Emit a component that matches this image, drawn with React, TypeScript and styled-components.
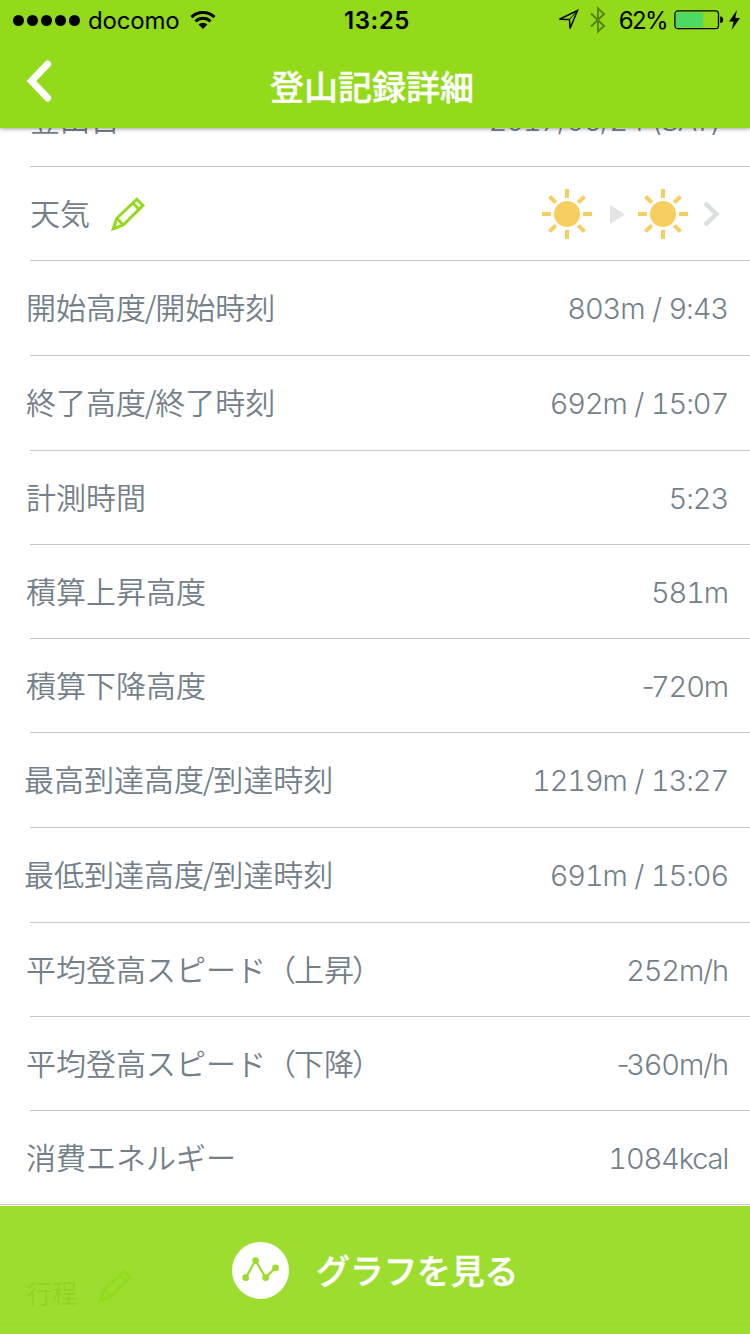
import React from "react";
import styled, { createGlobalStyle } from "styled-components";

const GREEN = "#92da1a";
const SLATE = "#73808a";
const RULE = "#c8c8ca";

const GlobalStyle = createGlobalStyle`
  * { box-sizing: border-box; }
  body {
    margin: 0;
    background: #fff;
    font-family: "Noto Sans CJK JP", sans-serif;
  }
`;

const Screen = styled.div`
  position: relative;
  width: 750px;
  height: 1334px;
  overflow: hidden;
  background: #fff;
`;

const Header = styled.header`
  position: absolute;
  inset: 0 0 auto 0;
  z-index: 2;
  height: 128px;
  background: ${GREEN};
  box-shadow: 0 1px 4px rgba(0, 0, 0, 0.38);
`;

const StatusBar = styled.div`
  display: grid;
  grid-template-columns: 1fr auto 1fr;
  align-items: center;
  height: 40px;
  padding: 0 10px 0 13px;
  font-family: Inter, sans-serif;
  font-size: 24px;
  color: #000;
`;

const StatusGroup = styled.div<{ $end?: boolean }>`
  display: flex;
  align-items: center;
  justify-content: ${(p) => (p.$end ? "flex-end" : "flex-start")};
`;

const SignalDots = styled.div`
  display: flex;
  gap: 3px;
  margin-right: 8px;
`;

const Dot = styled.i`
  width: 11px;
  height: 11px;
  border-radius: 50%;
  background: #000;
`;

const Carrier = styled.span`
  margin-right: 11px;
  letter-spacing: -0.2px;
`;

const Clock = styled.span`
  padding-left: 1px;
  font-weight: 600;
  letter-spacing: 0.6px;
`;

const Percent = styled.span`
  margin: 0 7px 0 13px;
  letter-spacing: -1.6px;
`;

const NavBar = styled.div`
  display: grid;
  grid-template-columns: 80px 1fr 80px;
  align-items: center;
  height: 88px;
`;

const BackButton = styled.button`
  display: flex;
  padding: 0 0 6px 24px;
  border: 0;
  background: none;
`;

const Title = styled.h1`
  margin: 0;
  padding: 4px 6px 0 0;
  text-align: center;
  font-size: 34px;
  line-height: 44px;
  font-weight: 500;
  -webkit-text-stroke: 0.4px #fff;
  color: #fff;
`;

const List = styled.main`
  display: flex;
  flex-direction: column;
  padding-top: 73px;
`;

const Row = styled.div<{
  $height: number;
  $indent: number;
  $end?: number;
  $lift?: number;
  $full?: boolean;
}>`
  display: flex;
  align-items: center;
  justify-content: space-between;
  flex: none;
  height: ${(p) => p.$height}px;
  padding: 0 ${(p) => p.$end ?? 22}px ${(p) => p.$lift ?? p.$height - 94}px ${(p) => p.$indent}px;
  background: linear-gradient(${RULE}, ${RULE}) ${(p) => (p.$full ? 0 : 30)}px 100% / 100% 1px no-repeat;
`;

const Label = styled.span`
  padding-bottom: 4px;
  font-size: 30px;
  line-height: 44px;
  font-weight: 350;
  color: ${SLATE};
  white-space: nowrap;
`;

const Tight = styled.span<{ $by: number }>`
  letter-spacing: ${(p) => -p.$by}px;
`;

const Slash = styled.span`
  margin: 0 -1.3px;
`;

const Value = styled.span<{ $tracking?: number }>`
  padding-top: 2px;
  font-family: Inter, "Liberation Sans", sans-serif;
  font-size: 29px;
  line-height: 44px;
  font-weight: 300;
  font-variant-numeric: tabular-nums;
  letter-spacing: ${(p) => p.$tracking ?? -1.15}px;
  word-spacing: 1px;
  color: ${SLATE};
  white-space: nowrap;
`;

const LabelGroup = styled.div`
  display: flex;
  align-items: center;
  gap: 20px;
`;

const Weather = styled.div`
  display: flex;
  align-items: center;
  margin-right: 7px;
`;

const ItineraryRow = styled.section`
  display: flex;
  align-items: flex-end;
  gap: 20px;
  flex: none;
  height: 120px;
  padding: 0 0 9px 27px;
  border-bottom: 1px solid ${RULE};
  svg { margin-bottom: 11px; }
`;

const SectionLabel = styled(Label)`
  font-size: 25px;
  line-height: 38px;
`;

const GraphButton = styled.button`
  position: absolute;
  inset: auto 0 0 0;
  z-index: 1;
  display: flex;
  align-items: center;
  gap: 26px;
  height: 128px;
  padding: 0 0 0 232px;
  border: 0;
  background: rgba(146, 218, 26, 0.91);
  color: #fff;
  font-family: "Noto Sans CJK JP", sans-serif;
  font-size: 34px;
  line-height: 44px;
  font-weight: 500;
  letter-spacing: -0.3px;
  -webkit-text-stroke: 0.4px #fff;
`;

const Pencil = () => (
  <svg width="36" height="36" viewBox="0 0 36 36" fill="none" stroke={GREEN} strokeWidth="2.9">
    <path d="M3.5 32.5 6.8 22.2 26.8 3.2 33 9.4 13.2 29Z" />
    <path d="M22.8 7 29 13.2M6.8 22.2 13.2 29" />
    <path d="M1 35 3.8 27 9 32.4Z" fill={GREEN} stroke="none" />
  </svg>
);

const Sun = () => (
  <svg width="50" height="50" viewBox="0 0 50 50" stroke="#f7cf60" strokeWidth="4">
    <circle cx="25" cy="25" r="13" fill="#f7cf60" stroke="none" />
    <path d="M25 0v9M25 41v9M0 25h9M41 25h9M7.5 7.5l6.2 6.2M36.3 36.3l6.2 6.2M7.5 42.5l6.2-6.2M36.3 13.7l6.2-6.2" />
  </svg>
);

const PlayArrow = styled.svg`
  margin: 0 13px 0 18px;
`;

const Chevron = styled.svg`
  margin-left: 15px;
`;

const Location = () => (
  <svg width="22" height="22" viewBox="0 0 22 22" fill="none" stroke="#000" strokeWidth="1.5">
    <path d="M1.5 10.2 19.5 1.5 12 19.5 11.5 10.5Z" />
    <path d="M11.5 10.5 19.5 1.5" strokeWidth="1" />
  </svg>
);

const Bluetooth = styled.svg`
  margin-left: 10px;
`;

const Wifi = () => (
  <svg width="26" height="20" viewBox="0 0 26 20" fill="none" stroke="#000" strokeWidth="3">
    <path d="M1.5 7.2a16.5 16.5 0 0 1 23 0M5.5 11.4a10.8 10.8 0 0 1 15 0" />
    <path d="M8.6 14.6a6.3 6.3 0 0 1 8.8 0L13 19Z" fill="#000" stroke="none" />
  </svg>
);

const Battery = () => (
  <svg width="50" height="20" viewBox="0 0 50 20">
    <rect x="0.9" y="0.9" width="43.6" height="17.8" rx="3.2" fill="none" stroke="#000" strokeWidth="1.3" />
    <rect x="2.2" y="2.5" width="27" height="14.7" rx="1" fill="#4cd964" />
    <path d="M46.2 6.3c4 .6 4 6.2 0 6.8Z" fill="#000" />
  </svg>
);

const Bolt = styled.svg`
  margin-left: 5px;
`;

const GraphIcon = () => (
  <svg width="58" height="58" viewBox="0 0 58 58">
    <circle cx="28.5" cy="29.4" r="28.5" fill="#fff" />
    <path d="M13.7 36.6 23.6 19.6 33.6 36.6 43.5 26.8" fill="none" stroke="#9bdc2f" strokeWidth="2.2" />
    <g fill="#9bdc2f">
      <circle cx="13.7" cy="36.6" r="3.4" />
      <circle cx="23.6" cy="19.6" r="3.4" />
      <circle cx="33.6" cy="36.6" r="3.4" />
      <circle cx="43.5" cy="26.8" r="3.4" />
    </g>
  </svg>
);

type RecordItem = { label: string; value: string; height: number; indent: number; full?: boolean };

const records: RecordItem[] = [
  { label: "開始高度/開始時刻", value: "803m / 9:43", height: 95, indent: 26 },
  { label: "終了高度/終了時刻", value: "692m / 15:07", height: 95, indent: 26 },
  { label: "計測時間", value: "5:23", height: 94, indent: 26 },
  { label: "積算上昇高度", value: "581m", height: 94, indent: 26 },
  { label: "積算下降高度", value: "-720m", height: 94, indent: 26 },
  { label: "最高到達高度/到達時刻", value: "1219m / 13:27", height: 95, indent: 24 },
  { label: "最低到達高度/到達時刻", value: "691m / 15:06", height: 95, indent: 24 },
  { label: "平均登高スピード（上昇）", value: "252m/h", height: 94, indent: 26 },
  { label: "平均登高スピード（下降）", value: "-360m/h", height: 94, indent: 26 },
  { label: "消費エネルギー", value: "1084kcal", height: 94, indent: 26, full: true },
];

// Slashes, minus signs and the characters beside full-width brackets are set tighter.
const kern = (text: string) =>
  text.split(/(\/|（|.(?=）))/).map((part, i) => {
    if (i % 2 === 0) return part;
    return part === "/" ? <Slash key={i}>/</Slash> : <Tight key={i} $by={2}>{part}</Tight>;
  });

const kernMinus = (text: string) =>
  text.startsWith("-") ? (
    <>
      <Tight $by={6.5}>-</Tight>
      {text.slice(1)}
    </>
  ) : (
    text
  );

export default function App() {
  return (
    <Screen>
      <GlobalStyle />
      <Header>
        <StatusBar>
          <StatusGroup>
            <SignalDots>
              {[0, 1, 2, 3, 4].map((i) => (
                <Dot key={i} />
              ))}
            </SignalDots>
            <Carrier>docomo</Carrier>
            <Wifi />
          </StatusGroup>
          <Clock>13:25</Clock>
          <StatusGroup $end>
            <Location />
            <Bluetooth width="16" height="28" viewBox="0 0 16 28" fill="none" stroke="#57830f" strokeWidth="2">
              <path d="M1 7.5 14 20 8 25.5V2.5L14 8 1 20.5" />
            </Bluetooth>
            <Percent>62%</Percent>
            <Battery />
            <Bolt width="11" height="20" viewBox="0 0 11 20">
              <path d="M8 0 0 11.5h4.6L2.6 20 11 8H6.3Z" fill="#000" />
            </Bolt>
          </StatusGroup>
        </StatusBar>
        <NavBar>
          <BackButton aria-label="戻る">
            <svg width="30" height="44" viewBox="0 0 30 44" fill="none" stroke="#fff" strokeWidth="6.9">
              <path d="M23.7 5 7.4 22 23.7 39" strokeLinecap="round" />
            </svg>
          </BackButton>
          <Title>登山記録詳細</Title>
        </NavBar>
      </Header>

      <List>
        <Row $height={94} $indent={30} $end={30} $lift={0}>
          <Label>登山日</Label>
          <Value $tracking={-1.5}>2017/06/24 (SAT)</Value>
        </Row>
        <Row $height={94} $indent={30}>
          <LabelGroup>
            <Label>天気</Label>
            <Pencil />
          </LabelGroup>
          <Weather>
            <Sun />
            <PlayArrow width="15" height="19" viewBox="0 0 15 19">
              <path d="M0 0 15 9.5 0 19Z" fill="#e4e4e4" />
            </PlayArrow>
            <Sun />
            <Chevron width="18" height="26" viewBox="0 0 18 26" fill="none" stroke="#d9dfdf" strokeWidth="4.5">
              <path d="M2 2 13.3 13 2 24" />
            </Chevron>
          </Weather>
        </Row>
        {records.map((r) => (
          <Row key={r.label} $height={r.height} $indent={r.indent} $full={r.full}>
            <Label>{kern(r.label)}</Label>
            <Value>{kernMinus(r.value)}</Value>
          </Row>
        ))}
        <ItineraryRow>
          <SectionLabel>行程</SectionLabel>
          <Pencil />
        </ItineraryRow>
      </List>

      <GraphButton>
        <GraphIcon />
        グラフを見る
      </GraphButton>
    </Screen>
  );
}
